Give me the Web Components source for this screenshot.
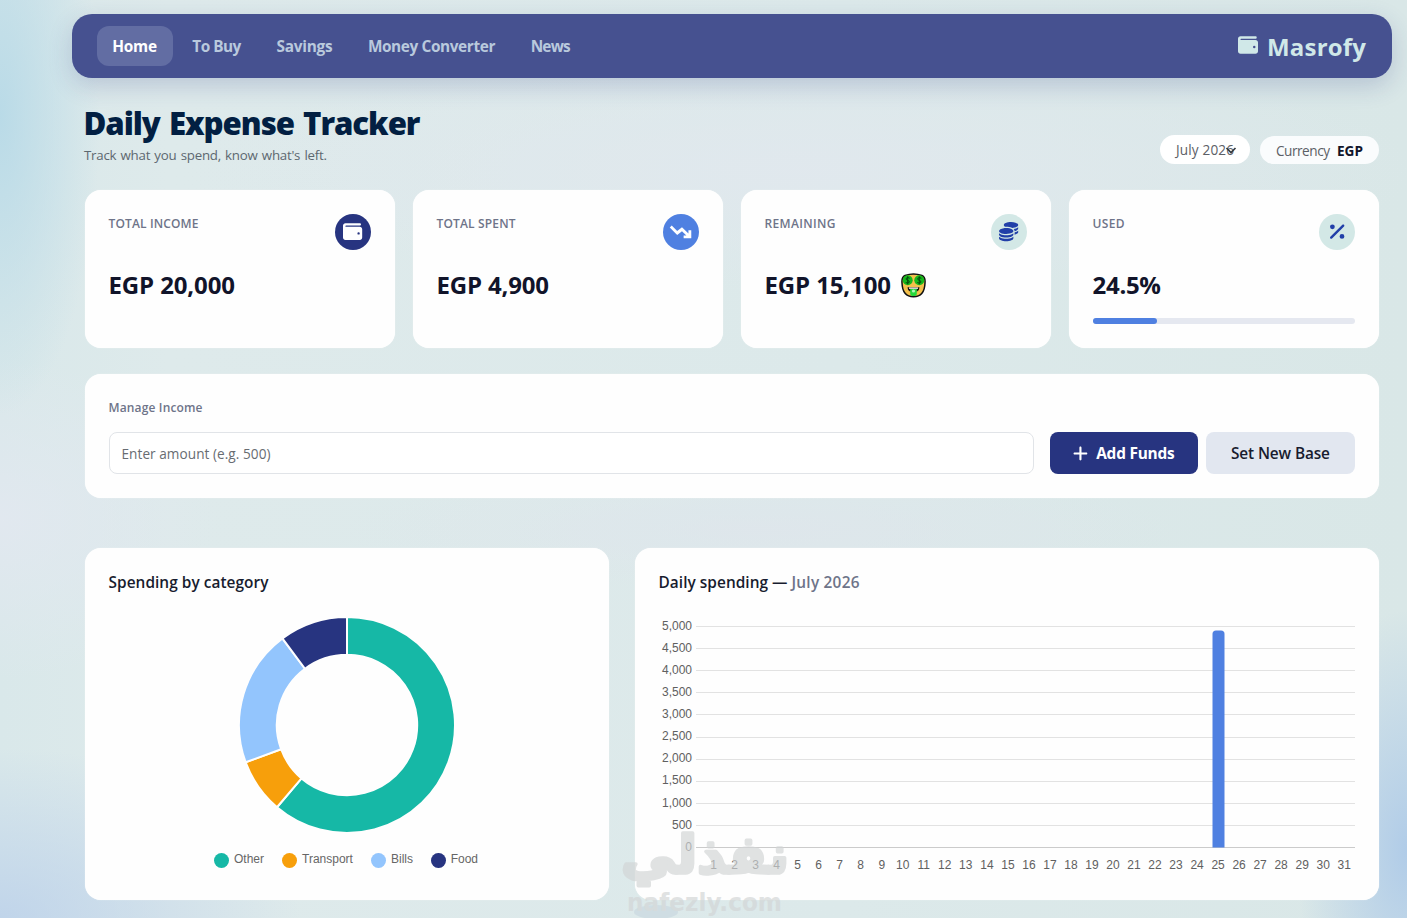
<!DOCTYPE html>
<html lang="en">
<head>
<meta charset="UTF-8">
<title>Masrofy</title>
<style>
    body {
        margin: 0;
        height: 918px;
        overflow: hidden;
        font-family: "Open Sans", "Noto Sans", sans-serif;
        color: #11142d;
        background:
            radial-gradient(ellipse 100px 300px at 0 115px, rgba(182, 217, 231, .9), rgba(182, 217, 231, 0)),
            radial-gradient(ellipse 300px 170px at 0 918px, rgba(184, 206, 234, .75), rgba(190, 210, 236, 0)),
            radial-gradient(ellipse 110px 240px at 1407px 850px, rgba(172, 201, 232, .9), rgba(180, 205, 234, 0)),
            radial-gradient(ellipse 220px 160px at 0 520px, rgba(226, 232, 240, .9), rgba(226, 232, 240, 0)),
            radial-gradient(ellipse 420px 60px at 760px 530px, rgba(223, 229, 236, .7), rgba(223, 229, 236, 0)),
            radial-gradient(ellipse 620px 120px at 800px 170px, rgba(225, 232, 238, .9), rgba(225, 232, 238, 0)),
            linear-gradient(90deg, #d9e8ea, #deeaeb 12%, #dce9ea 60%, #d9e7e7);
    }
</style>
</head>
<body>
<expense-app></expense-app>

<script>
const ICONS = {
    wallet: ['0 0 512 512', 'M64 32C28.7 32 0 60.7 0 96V416c0 35.3 28.7 64 64 64H448c35.3 0 64-28.7 64-64V192c0-35.3-28.7-64-64-64H80c-8.8 0-16-7.2-16-16s7.2-16 16-16H448c17.7 0 32-14.3 32-32s-14.3-32-32-32H64zM416 272a32 32 0 1 1 0 64 32 32 0 1 1 0-64z'],
    trend: ['0 0 576 512', 'M46 94L192 240L320 140L492 310V220H568V434H364V358H438L320 244L192 350L-6 150z'],
    coins: ['0 0 512 512', 'M512 80c0 18-14.3 34.6-38.4 48c-29.1 16.1-72.5 27.5-122.3 30.9c-3.7-1.8-7.4-3.5-11.3-5C300.6 137.4 248.2 128 192 128c-8.3 0-16.4 .2-24.5 .6l-1.1-.6C142.3 114.6 128 98 128 80c0-44.2 86-80 192-80S512 35.8 512 80zM160.7 161.1c10.2-.7 20.7-1.1 31.3-1.1c62.2 0 117.4 12.3 152.5 31.4C369.3 204.9 384 221.7 384 240c0 4-.7 7.9-2.1 11.7c-4.6 13.2-17 25.3-35 35.5c-.5 .3-1 .5-1.3 .7c-35 19.4-90.8 32-153.6 32c-59.6 0-112.9-11.3-148.2-29.1c-1.9-.9-3.7-1.9-5.5-2.9C14.3 274.6 0 258 0 240c0-34.8 53.4-64.5 128-75.4c10.5-1.5 21.4-2.7 32.7-3.5zM416 240c0-21.9-10.6-39.9-24.1-53.4c28.3-4.4 54.2-11.4 76.2-20.5c16.3-6.8 31.5-15.2 43.9-25.5V176c0 19.3-16.5 37.1-43.8 50.9c-14.6 7.4-32.4 13.7-52.4 18.5c.1-1.8 .2-3.5 .2-5.3zm-32 96c0 18-14.3 34.6-38.4 48c-1.8 1-3.6 1.9-5.5 2.9C304.9 404.7 251.6 416 192 416c-62.8 0-118.6-12.6-153.6-32C14.3 370.6 0 354 0 336V300.6c12.5 10.3 27.6 18.7 43.9 25.5C83.4 342.6 135.8 352 192 352s108.6-9.4 148.1-25.9c7.8-3.2 15.3-6.9 22.4-10.9c6.1-3.4 11.8-7.2 17.2-11.2c1.5-1.1 2.9-2.3 4.3-3.4V336zm32 0V278.1c19-4.2 36.5-9.5 52.1-16c16.3-6.8 31.5-15.2 43.9-25.5V272c0 10.5-5 21-14.9 30.9c-16.3 16.3-45 29.7-81.3 38.4c.1-1.7 .2-3.5 .2-5.3zM192 448c56.2 0 108.6-9.4 148.1-25.9c16.3-6.8 31.5-15.2 43.9-25.5V432c0 44.2-86 80-192 80S0 476.2 0 432V396.6c12.5 10.3 27.6 18.7 43.9 25.5C83.4 438.6 135.8 448 192 448z'],
    percent: ['0 0 384 512', 'M374.6 118.6c12.5-12.5 12.5-32.8 0-45.3s-32.8-12.5-45.3 0l-320 320c-12.5 12.5-12.5 32.8 0 45.3s32.8 12.5 45.3 0l320-320zM128 128A64 64 0 1 0 0 128a64 64 0 1 0 128 0zM384 384a64 64 0 1 0-128 0 64 64 0 1 0 128 0z'],
    plus: ['0 0 448 512', 'M256 80c0-17.700-14.300-32-32-32s-32 14.300-32 32V224H48c-17.700 0-32 14.300-32 32s14.300 32 32 32H192V432c0 17.700 14.300 32 32 32s32-14.300 32-32V288H400c17.700 0 32-14.300 32-32s-14.300-32-32-32H256V80z']
};

class XpIcon extends HTMLElement {
    constructor() {
        super();
        this.attachShadow({ mode: 'open' });
    }

    connectedCallback() {
        const [box, path] = ICONS[this.getAttribute('name')];
        this.shadowRoot.innerHTML = `
            <style>
                :host { display: inline-flex; height: 19.2px; }
                svg { height: 100%; width: auto; fill: currentColor; display: block; overflow: visible; }
            </style>
            <svg viewBox="${box}"><path d="${path}"/></svg>
        `;
    }
}

// Text run that tracks its letters to a fixed width
class XpText extends HTMLElement {
    constructor() {
        super();
        this.attachShadow({ mode: 'open' });
    }

    connectedCallback() {
        this.shadowRoot.innerHTML = `
            <style>
                :host { display: inline-block; white-space: nowrap; }
                span { display: inline-block; }
            </style>
            <span><slot></slot></span>
        `;
        const span = this.shadowRoot.querySelector('span');
        const target = parseFloat(this.getAttribute('w'));
        const count = this.textContent.length;
        span.style.letterSpacing = '0px';
        const natural = span.getBoundingClientRect().width;
        span.style.letterSpacing = ((target - natural) / (count - 1)) + 'px';
        this.style.width = target + 'px';
    }
}

class XpNavbar extends HTMLElement {
    constructor() {
        super();
        this.attachShadow({ mode: 'open' });
    }

    connectedCallback() {
        this.shadowRoot.innerHTML = `
            <style>
                :host {
                    display: flex;
                    align-items: center;
                    justify-content: space-between;
                    box-sizing: border-box;
                    height: 64px;
                    padding: 0 26px 0 25px;
                    border-radius: 20px;
                    background: #465190;
                    box-shadow: 0 8px 24px rgba(40, 53, 128, .2);
                }
                nav { display: flex; gap: 4px; }
                a {
                    display: flex;
                    align-items: center;
                    box-sizing: border-box;
                    height: 40px;
                    padding: 0 16px 0 15.3px;
                    border-radius: 12px;
                    font-size: 15.4px;
                    font-weight: 700;
                    color: #b9c9dd;
                }
                a.active { color: #fff; background: #626da3; }
                .brand { display: flex; align-items: center; gap: 9px; color: #d0e8e8; }
                .brand xp-icon { height: 20px; margin-top: -2px; }
                .brand xp-text { font-size: 24px; font-weight: 750; line-height: 40px; margin-top: 1px; }
            </style>
            <nav>
                <a class="active"><xp-text w="44.7">Home</xp-text></a>
                <a><xp-text w="49">To Buy</xp-text></a>
                <a><xp-text w="56">Savings</xp-text></a>
                <a><xp-text w="127.500">Money Converter</xp-text></a>
                <a><xp-text w="40">News</xp-text></a>
            </nav>
            <div class="brand"><xp-icon name="wallet"></xp-icon><xp-text w="99">Masrofy</xp-text></div>
        `;
    }
}

class XpCard extends HTMLElement {
    constructor() {
        super();
        this.attachShadow({ mode: 'open' });
        this.shadowRoot.innerHTML = `
            <style>
                :host {
                    display: block;
                    box-sizing: border-box;
                    padding: 24px;
                    border-radius: 16px;
                    background: #fefefe;
                    box-shadow: 0 0 1px rgba(255, 255, 255, .9);
                }
            </style>
            <slot></slot>
        `;
    }
}

class XpStat extends HTMLElement {
    constructor() {
        super();
        this.attachShadow({ mode: 'open' });
    }

    connectedCallback() {
        const used = this.getAttribute('used');
        this.shadowRoot.innerHTML = `
            <style>
                :host { display: block; }
                xp-card { height: 158px; }
                .top { display: flex; justify-content: space-between; height: 36px; }
                .label { margin-left: -.5px; font-size: 12px; font-weight: 550; line-height: 20px; color: #6e7489; }
                .badge {
                    display: flex;
                    align-items: center;
                    justify-content: center;
                    width: 36px;
                    height: 36px;
                    border-radius: 50%;
                    color: ${this.getAttribute('fg')};
                    background: ${this.getAttribute('bg')};
                }
                .value { display: flex; align-items: center; gap: 10px; height: 32px; margin: 18px 0 0 -.5px; font-size: 24px; font-weight: 700; color: #11142a; }
                ::slotted(*) { margin-top: 2px; }
                .bar { height: 6px; margin-top: 18px; border-radius: 3px; background: #e5e8f0; }
                .bar div { height: 6px; border-radius: 3px; background: #4f80e1; }
            </style>
            <xp-card>
                <div class="top">
                    <xp-text class="label" w="${this.getAttribute('lw')}">${this.getAttribute('label')}</xp-text>
                    <div class="badge"><xp-icon name="${this.getAttribute('icon')}"></xp-icon></div>
                </div>
                <div class="value"><xp-text w="${this.getAttribute('vw')}">${this.getAttribute('value')}</xp-text><slot></slot></div>
                ${used ? `<div class="bar"><div style="width:${used}%"></div></div>` : ''}
            </xp-card>
        `;
    }
}

class XpMoneyFace extends HTMLElement {
    constructor() {
        super();
        this.attachShadow({ mode: 'open' });
        this.shadowRoot.innerHTML = `
            <style>
                :host { display: block; width: 25px; height: 25px; }
                svg { display: block; }
            </style>
            <svg width="25" height="25" viewBox="0 0 25 25">
                <path d="M4 2.500Q12.500-.5 21 2.500Q24.500 4 24 10Q23.500 23.800 12.500 23.800Q1.500 23.800 1 10Q.5 4 4 2.500z" fill="#f4c04c" stroke="#111" stroke-width="1.500"/>
                <circle cx="6.700" cy="7.300" r="5" fill="#16b81b"/>
                <circle cx="18.300" cy="7.300" r="5" fill="#16b81b"/>
                <g fill="none" stroke="#06460c" stroke-width="1">
                    <path d="M8.700 5.300Q6.700 3.800 5.300 5.200Q4.500 6.700 6.700 7.300Q9 8 8.100 9.500Q6.700 10.800 4.700 9.500M6.700 3.300v8"/>
                    <path d="M20.300 5.300Q18.300 3.800 16.900 5.200Q16.100 6.700 18.300 7.300Q20.600 8 19.700 9.500Q18.300 10.800 16.300 9.500M18.300 3.300v8"/>
                </g>
                <path d="M6.500 14.200H18.500Q18.500 17.500 16 18.500H9Q6.500 17.500 6.500 14.200z" fill="#111"/>
                <path d="M8 14.500h9v1.300H8z" fill="#fff"/>
                <path d="M9.200 16h6.600v4.800q0 2.300-3.300 2.300t-3.300-2.300z" fill="#25d83c"/>
                <circle cx="12.500" cy="18" r="1.600" fill="#b2f3b7"/>
            </svg>
        `;
    }
}

class XpDonut extends HTMLElement {
    constructor() {
        super();
        this.attachShadow({ mode: 'open' });
    }

    connectedCallback() {
        const data = [['#16b8a6', 3000], ['#f79f0b', 400], ['#93c5fd', 1000], ['#273480', 500]];
        const point = (r, a) => `${(108 + r * Math.sin(a)).toFixed(2)} ${(108 - r * Math.cos(a)).toFixed(2)}`;
        let angle = 0;
        const arcs = data.map(([color, value]) => {
            const end = angle + value / 4900 * Math.PI * 2;
            const large = end - angle > Math.PI ? 1 : 0;
            const d = `M${point(108, angle)}A108 108 0 ${large} 1 ${point(108, end)}L${point(70.2, end)}A70.2 70.2 0 ${large} 0 ${point(70.2, angle)}z`;
            angle = end;
            return `<path d="${d}" fill="${color}" stroke="#fefefe" stroke-width="2"/>`;
        }).join('');
        this.shadowRoot.innerHTML = `
            <style>
                :host { display: block; }
                svg { display: block; margin: 0 auto; overflow: visible; }
                .legend { display: flex; justify-content: center; margin: 18px 2px 0 0; height: 18px; font: 12px "Liberation Sans", sans-serif; color: #666; }
                .legend div { display: flex; gap: 5px; }
                .legend i { width: 15px; height: 15px; margin-top: 2px; border-radius: 50%; }
                .legend span { line-height: 16px; }
            </style>
            <svg width="216" height="216">${arcs}</svg>
            <div class="legend">
                <div style="width:68px"><i style="background:#16b8a6"></i><span>Other</span></div>
                <div style="width:89px"><i style="background:#f79f0b"></i><span>Transport</span></div>
                <div style="width:60px"><i style="background:#93c5fd"></i><span>Bills</span></div>
                <div style="width:47px"><i style="background:#273480"></i><span>Food</span></div>
            </div>
        `;
    }
}

class XpBars extends HTMLElement {
    constructor() {
        super();
        this.attachShadow({ mode: 'open' });
    }

    connectedCallback() {
        let grid = '';
        for (let i = 0; i <= 10; i++) {
            const y = 240 - i * 22.1;
            grid += `<path d="M37 ${Math.round(y) + .5}H696" stroke="${i ? '#e2e2e2' : '#cbcbcb'}"/>`;
            grid += `<text x="33" y="${Math.round(y - .24) + 4}" text-anchor="end">${(i * 500).toLocaleString('en-US')}</text>`;
        }
        let days = '';
        for (let d = 1; d <= 31; d++) {
            days += `<text x="${(54.6 + (d - 1) * 21.02).toFixed(1)}" y="262" text-anchor="middle">${d}</text>`;
        }
        this.shadowRoot.innerHTML = `
            <style>
                :host { display: block; }
                svg { display: block; font: 12px "Liberation Sans", sans-serif; fill: #606060; }
            </style>
            <svg width="697" height="272">
                ${grid}${days}
                <path d="M553.500 240.500V27q0-3.500 3.500-3.500h5q3.500 0 3.500 3.500V240.500z" fill="#4f80e1"/>
            </svg>
        `;
    }
}

class XpWatermark extends HTMLElement {
    constructor() {
        super();
        this.attachShadow({ mode: 'open' });
        this.shadowRoot.innerHTML = `
            <style>
                :host { position: absolute; left: 614px; top: 822px; opacity: .68; }
                svg { display: block; fill: #d2d5d6; }
                text { font-weight: 700; }
            </style>
            <svg width="190" height="96">
                <text x="7" y="51" direction="ltr" font-family="DejaVu Sans" font-size="52" stroke="#d2d5d6" stroke-width="3.500" stroke-linejoin="round" textLength="168" lengthAdjust="spacingAndGlyphs">نفذلي</text>
                <ellipse cx="42" cy="90" rx="22" ry="7" fill="#c9d8e0"/>
                <text x="13" y="89" font-family="DejaVu Sans" font-size="24" textLength="155" lengthAdjust="spacingAndGlyphs">nafezly.com</text>
            </svg>
        `;
    }
}

class ExpenseApp extends HTMLElement {
    constructor() {
        super();
        this.attachShadow({ mode: 'open' });
    }

    connectedCallback() {
        this.shadowRoot.innerHTML = `
            <style>
                :host { display: block; padding: 14px 15px 0 72px; }
                main { padding: 0 13px; }
                header { display: flex; justify-content: space-between; height: 112px; box-sizing: border-box; padding-top: 24px; }
                h1 { margin: 0 0 0 -1.500px; font-size: 31.2px; font-weight: 800; line-height: 42px; word-spacing: 2px; color: #021f42; }
                .sub { display: block; margin-left: -1px; margin-top: 1px; font-size: 13.3px; line-height: 20px; word-spacing: 1px; color: #5d6870; }
                .pills { display: flex; gap: 10px; align-items: flex-end; height: 62px; font-size: 13.6px; color: #5c6066; }
                .pill { display: flex; align-items: center; box-sizing: border-box; height: 28px; padding: 0 16px; border-radius: 15px; background: #fafcfd; gap: 7px; }
                .month { height: 29px; background: #fff; position: relative; width: 90px; }
                .month svg { position: absolute; left: 65px; top: 12px; }
                b { color: #11142a; }
                .stats { display: grid; grid-template-columns: repeat(4, 310px); gap: 18px; }
                .income { height: 124px; margin-top: 26px; }
                .income .cap { display: block; margin-left: -.5px; font-size: 12px; font-weight: 600; line-height: 20px; color: #6e7489; }
                .row { display: flex; margin-top: 14px; height: 42px; }
                .field { flex: 1; box-sizing: border-box; border: 1px solid #e1e4e8; border-radius: 8px; padding: 0 11.500px; background: #fff; font-size: 13.6px; line-height: 42px; color: #686c72; }
                .btn { display: flex; align-items: center; justify-content: center; gap: 8px; height: 42px; border-radius: 8px; font-size: 15.4px; font-weight: 700; background: #e2e7f0; color: #181c2e; }
                .add { width: 148px; margin: 0 8px 0 16px; background: #273480; color: #fff; }
                .btn xp-icon { height: 17px; }
                .set { width: 149px; font-weight: 600; }
                .charts { display: grid; grid-template-columns: 524px 744px; gap: 26px; margin-top: 50px; }
                .charts xp-card { height: 352px; }
                h2 { display: flex; gap: 4px; margin: 0 0 0 -.5px; font-size: 15.4px; font-weight: 600; line-height: 22px; color: #181c2e; }
                h2 .m { color: #6e7489; }
                xp-donut { margin-top: 23px; }
                xp-bars { margin-top: 13px; }
            </style>
            <xp-navbar></xp-navbar>
            <main>
                <header>
                    <div>
                        <h1><xp-text w="337">Daily Expense Tracker</xp-text></h1>
                        <xp-text class="sub" w="243">Track what you spend, know what's left.</xp-text>
                    </div>
                    <div class="pills">
                        <div class="pill month"><xp-text w="58">July 2026</xp-text><svg width="12" height="7"><path d="M1.500 1l4.500 4.500L10.500 1" fill="none" stroke="#343a40" stroke-width="1.700"/></svg></div>
                        <div class="pill"><xp-text w="54">Currency</xp-text><b><xp-text w="26">EGP</xp-text></b></div>
                    </div>
                </header>
                <section class="stats">
                    <xp-stat label="TOTAL INCOME" lw="90" value="EGP 20,000" vw="126.500" icon="wallet" fg="#fff" bg="#273480"></xp-stat>
                    <xp-stat label="TOTAL SPENT" lw="79" value="EGP 4,900" vw="112.500" icon="trend" fg="#fff" bg="#4f80e1"></xp-stat>
                    <xp-stat label="REMAINING" lw="71" value="EGP 15,100" vw="126.500" icon="coins" fg="#213fa8" bg="#d3e8e6"><xp-money-face></xp-money-face></xp-stat>
                    <xp-stat label="USED" lw="32" value="24.5%" vw="68.500" icon="percent" fg="#213fa8" bg="#d3e8e6" used="24.5"></xp-stat>
                </section>
                <xp-card class="income">
                    <xp-text class="cap" w="94">Manage Income</xp-text>
                    <div class="row">
                        <div class="field"><xp-text w="149">Enter amount (e.g. 500)</xp-text></div>
                        <div class="btn add"><xp-icon name="plus"></xp-icon><xp-text w="78.500">Add Funds</xp-text></div>
                        <div class="btn set"><xp-text w="99">Set New Base</xp-text></div>
                    </div>
                </xp-card>
                <section class="charts">
                    <xp-card>
                        <h2><xp-text w="160">Spending by category</xp-text></h2>
                        <xp-donut></xp-donut>
                    </xp-card>
                    <xp-card>
                        <h2><xp-text w="129">Daily spending —</xp-text><xp-text class="m" w="68">July 2026</xp-text></h2>
                        <xp-bars></xp-bars>
                    </xp-card>
                </section>
            </main>
            <xp-watermark></xp-watermark>
        `;
    }
}

customElements.define('xp-icon', XpIcon);
customElements.define('xp-text', XpText);
customElements.define('xp-card', XpCard);
customElements.define('xp-money-face', XpMoneyFace);
customElements.define('xp-navbar', XpNavbar);
customElements.define('xp-stat', XpStat);
customElements.define('xp-donut', XpDonut);
customElements.define('xp-bars', XpBars);
customElements.define('xp-watermark', XpWatermark);
customElements.define('expense-app', ExpenseApp);
</script>
</body>
</html>
